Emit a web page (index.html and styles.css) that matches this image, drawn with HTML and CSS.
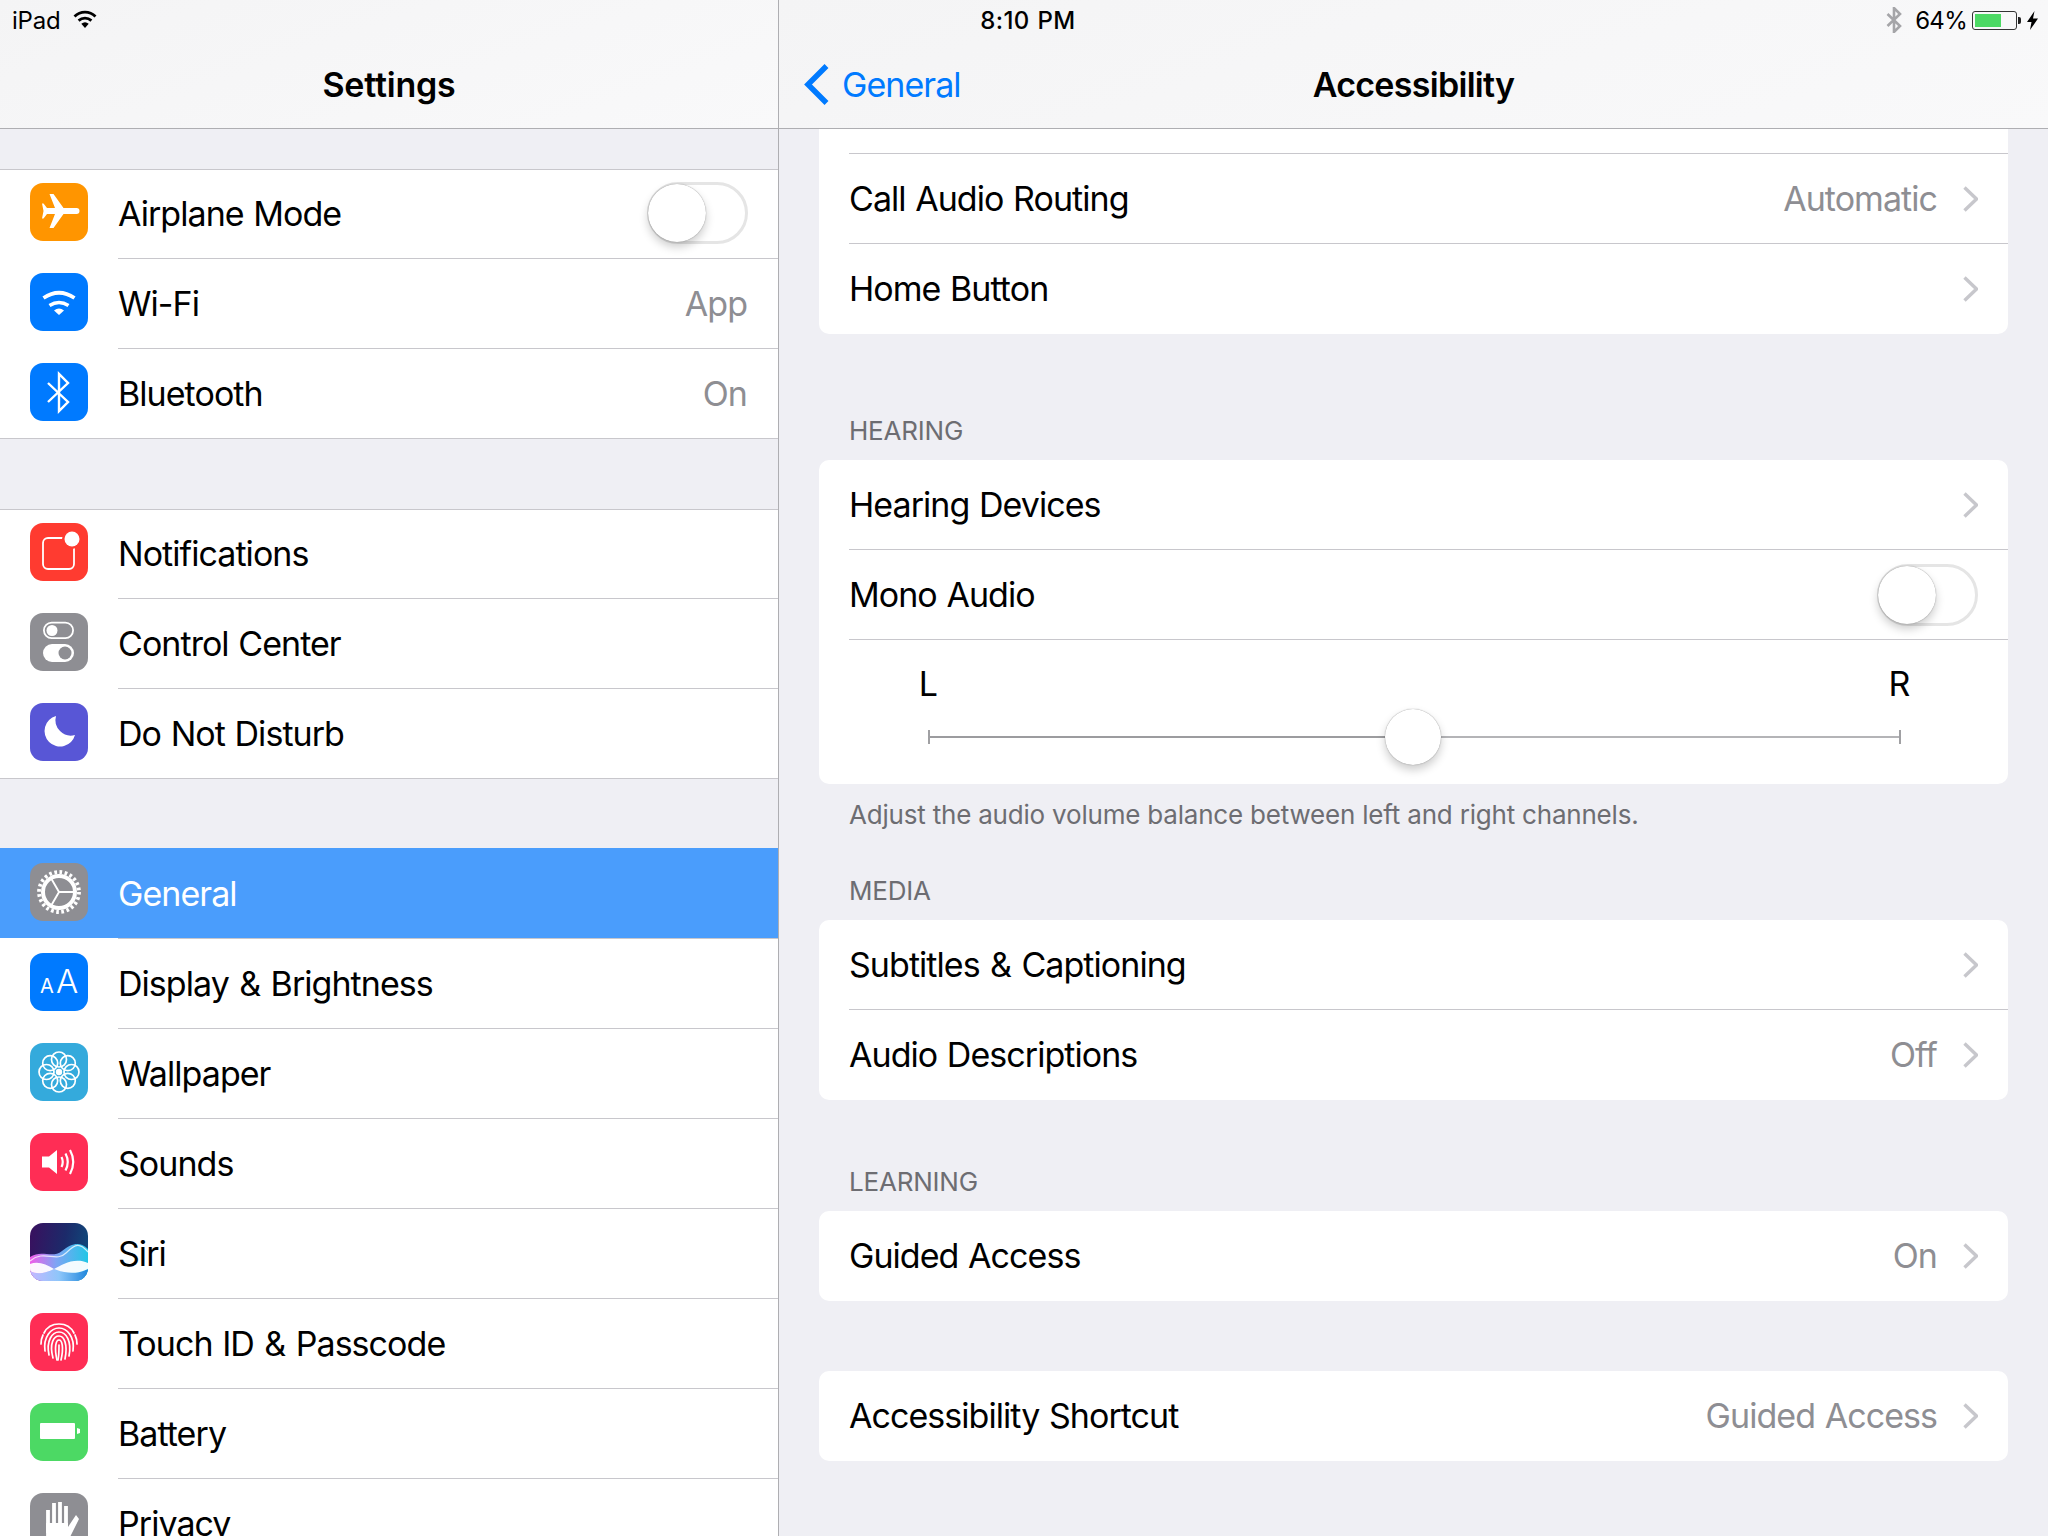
FILE: index.html
```html
<!DOCTYPE html>
<html lang="en">
<head>
<meta charset="utf-8">
<title>Settings - Accessibility</title>
<link rel="stylesheet" href="styles.css">
</head>
<body>
<div class="app">
  <div class="status">
    <div class="status-left">
      <span>iPad</span>
      <svg class="status-wifi" viewBox="0 0 24 18"><path d="M1.5 6.5A15 15 0 0 1 22.5 6.5" class="st-b"/><path d="M5.6 10.6A9.6 9.6 0 0 1 18.4 10.6" class="st-b"/><path d="M12 18L8.3 13.8A5.6 5.6 0 0 1 15.7 13.8Z"/></svg>
    </div>
    <div class="status-time">8:10 PM</div>
    <div class="status-right">
      <svg class="status-bt" viewBox="0 0 16 26"><path d="M1.5 7L14 19L8 25V1L14 7L1.5 19"/></svg>
      <span class="status-pct">64%</span>
      <div class="battery"><div class="battery-fill"></div></div>
      <div class="battery-tip"></div>
      <svg class="status-bolt" viewBox="0 0 11 19"><path d="M7.5 0L0 11H4.5L3 19L11 7.5H6Z"/></svg>
    </div>
  </div>

  <aside class="side">
    <header class="nav nav-side"><h1 class="nav-title">Settings</h1></header>
    <div class="side-list">
      <section class="group">
        <div class="row">
          <span class="icon bg-orange"><svg viewBox="0 0 58 58"><path class="w" d="M46.500 25H33.500L23.500 11H19.500L25 25H17L13.500 20.500H12L13.500 28L12 35.500H13.500L17 31H25L19.500 45H23.500L33.500 31H46.500Q49.500 31 49.500 28Q49.500 25 46.500 25Z"/></svg></span>
          <div class="row-body"><span class="label">Airplane Mode</span><span class="switch"><span class="knob"></span></span></div>
        </div>
        <div class="row">
          <span class="icon bg-blue"><svg viewBox="0 0 58 58"><path class="s" stroke-width="3.800" d="M13.500 25Q29 14.500 44.500 25"/><path class="s" stroke-width="3.500" d="M19.500 32.500Q29 26.500 38.500 32.500"/><path class="w" d="M29 42L24 37.500Q29 33.500 34 37.500Z"/></svg></span>
          <div class="row-body"><span class="label">Wi-Fi</span><span class="value">App</span></div>
        </div>
        <div class="row">
          <span class="icon bg-blue"><svg viewBox="0 0 58 58"><path class="s" stroke-width="2.400" d="M18 20L38 39L29 48V11L38 20L18 39"/></svg></span>
          <div class="row-body"><span class="label">Bluetooth</span><span class="value">On</span></div>
        </div>
      </section>

      <section class="group group-gap">
        <div class="row">
          <span class="icon bg-red"><svg viewBox="0 0 58 58"><rect class="s" stroke-width="1.800" x="13" y="15" width="31" height="31" rx="5"/><circle cx="42" cy="16" r="10" fill="#ff3b30"/><circle class="w" cx="42" cy="16" r="7.500"/></svg></span>
          <div class="row-body"><span class="label">Notifications</span></div>
        </div>
        <div class="row">
          <span class="icon bg-gray"><svg viewBox="0 0 58 58"><rect class="s" stroke-width="1.800" x="13.900" y="9.600" width="29.200" height="15.500" rx="7.750"/><circle class="w" cx="22" cy="17.500" r="5.500"/><rect class="w" x="13" y="31" width="31" height="18" rx="9"/><circle cx="35" cy="40" r="6.500" fill="#8e8e93"/></svg></span>
          <div class="row-body"><span class="label">Control Center</span></div>
        </div>
        <div class="row">
          <span class="icon bg-indigo"><svg viewBox="0 0 58 58"><path class="w" d="M26 13A15.500 15.500 0 1 0 45 32A15.500 15.500 0 0 1 26 13Z"/></svg></span>
          <div class="row-body"><span class="label">Do Not Disturb</span></div>
        </div>
      </section>

      <section class="group group-open">
        <div class="row row-selected">
          <span class="icon bg-gray"><svg viewBox="0 0 58 58"><circle class="s" stroke-width="3.800" stroke-dasharray="2.700 2.530" cx="29" cy="29" r="20"/><circle class="s" stroke-width="4" cx="29" cy="29" r="16"/><path class="s" stroke-width="1.900" d="M29 29H44M29 29L21.500 42M29 29L21.500 16"/></svg></span>
          <div class="row-body"><span class="label">General</span></div>
        </div>
        <div class="row">
          <span class="icon bg-blue"><svg viewBox="0 0 58 58"><text class="aa-small" x="10" y="40">A</text><text class="aa-big" x="26" y="40">A</text></svg></span>
          <div class="row-body"><span class="label">Display <span class="amp">&amp;</span> Brightness</span></div>
        </div>
        <div class="row">
          <span class="icon bg-cyan"><svg viewBox="0 0 58 58"><g class="flower"><circle class="s" cx="29" cy="16.500" r="7.500"/><circle class="s" cx="29" cy="41.500" r="7.500"/><circle class="s" cx="16.500" cy="29" r="7.500"/><circle class="s" cx="41.500" cy="29" r="7.500"/><circle class="s" cx="20.200" cy="20.200" r="7.500"/><circle class="s" cx="37.800" cy="20.200" r="7.500"/><circle class="s" cx="20.200" cy="37.800" r="7.500"/><circle class="s" cx="37.800" cy="37.800" r="7.500"/></g><circle class="w" cx="29" cy="29" r="3.200"/></svg></span>
          <div class="row-body"><span class="label">Wallpaper</span></div>
        </div>
        <div class="row">
          <span class="icon bg-pink"><svg viewBox="0 0 58 58"><path class="w" d="M12 23.500H19L27 17V41L19 34.500H12Z"/><path class="s" stroke-width="2.200" d="M31.500 24Q34 29 31.500 34M35.500 20.500Q40 29 35.500 37.500M40 17Q46.500 29 40 41"/></svg></span>
          <div class="row-body"><span class="label">Sounds</span></div>
        </div>
        <div class="row">
          <span class="icon bg-siri"><svg viewBox="0 0 58 58"><defs><linearGradient id="wa" x1="0" x2="1" y1="0" y2="0"><stop offset="0" stop-color="#f05ce8"/><stop offset=".45" stop-color="#7fa4f4"/><stop offset="1" stop-color="#22c6e6"/></linearGradient><linearGradient id="wb" x1="0" x2="1" y1="0" y2="0"><stop offset="0" stop-color="#c4b8ff"/><stop offset=".5" stop-color="#8ec6fa"/><stop offset="1" stop-color="#1f86dc"/></linearGradient></defs><path fill="url(#wa)" d="M0 34C12 26 22 36 32 28S50 18 58 26V58H0Z"/><path class="s" stroke-width="1.200" opacity=".75" d="M0 38C14 26 26 40 36 30S50 20 58 29"/><path fill="url(#wb)" d="M0 48C8 52 16 50 24 46C34 50 46 52 58 46V58H0Z"/><path class="w" opacity=".94" d="M0 41C8 38 16 41 24 46C32 42 44 34 58 40V46C46 52 34 50 24 46C16 50 8 52 0 48Z"/></svg></span>
          <div class="row-body"><span class="label">Siri</span></div>
        </div>
        <div class="row">
          <span class="icon bg-pink"><svg viewBox="0 0 58 58"><g class="finger"><path d="M14 20C20 8 38 8 44 20"/><path d="M11 31C11 26 12 24 13 22M47 31C47 26 46 24 45 22"/><path d="M15 38C13 24 21 15 29 15S45 24 43 38"/><path d="M19 42C16 28 22 19 29 19S42 28 39 43"/><path d="M23 45C19 30 24 23 29 23S38 31 35 46"/><path d="M27 47C24 34 26 27 29 27S34 34 31 47"/><path d="M29 32C29 38 29 42 28 47"/></g></svg></span>
          <div class="row-body"><span class="label">Touch ID <span class="amp">&amp;</span> Passcode</span></div>
        </div>
        <div class="row">
          <span class="icon bg-green"><svg viewBox="0 0 58 58"><rect class="w" x="10" y="20" width="35" height="16" rx="1"/><path class="w" d="M47 25L50 26V30L47 31Z"/></svg></span>
          <div class="row-body"><span class="label">Battery</span></div>
        </div>
        <div class="row">
          <span class="icon bg-gray"><svg viewBox="0 0 58 58"><path class="s" stroke-width="3.800" d="M18 17V40M24 10V36M30 9V36M36 13V36"/><path class="w" d="M16.100 30H38V34L46 22L49 26L40 44V58H16.100Z"/></svg></span>
          <div class="row-body"><span class="label">Privacy</span></div>
        </div>
      </section>
    </div>
  </aside>

  <main class="detail">
    <header class="nav nav-detail">
      <a class="back"><svg class="back-chevron" viewBox="0 0 25 41"><path d="M22.500 2L4 20.500L22.500 39"/></svg><span>General</span></a>
      <h1 class="nav-title">Accessibility</h1>
      <span></span>
    </header>
    <div class="detail-list">
      <section class="card card-top">
        <div class="item"><span class="label">Call Audio Routing</span><span class="value">Automatic</span><svg class="chevron" viewBox="0 0 15 26"><path d="M1.500 1.500L13.500 13L1.500 24.500"/></svg></div>
        <div class="item"><span class="label">Home Button</span><svg class="chevron" viewBox="0 0 15 26"><path d="M1.500 1.500L13.500 13L1.500 24.500"/></svg></div>
      </section>

      <h2 class="section-head head-hearing">HEARING</h2>
      <section class="card card-balance">
        <div class="item"><span class="label">Hearing Devices</span><svg class="chevron" viewBox="0 0 15 26"><path d="M1.500 1.500L13.500 13L1.500 24.500"/></svg></div>
        <div class="item"><span class="label">Mono Audio</span><span class="switch"><span class="knob"></span></span></div>
        <div class="balance">
          <div class="balance-labels"><span>L</span><span>R</span></div>
          <div class="slider">
            <span class="track track-left"></span>
            <span class="track track-right"></span>
            <span class="thumb"></span>
          </div>
        </div>
      </section>
      <p class="section-foot">Adjust the audio volume balance between left and right channels.</p>

      <h2 class="section-head head-media">MEDIA</h2>
      <section class="card">
        <div class="item"><span class="label">Subtitles <span class="amp">&amp;</span> Captioning</span><svg class="chevron" viewBox="0 0 15 26"><path d="M1.500 1.500L13.500 13L1.500 24.500"/></svg></div>
        <div class="item"><span class="label">Audio Descriptions</span><span class="value">Off</span><svg class="chevron" viewBox="0 0 15 26"><path d="M1.500 1.500L13.500 13L1.500 24.500"/></svg></div>
      </section>

      <h2 class="section-head head-learning">LEARNING</h2>
      <section class="card">
        <div class="item"><span class="label">Guided Access</span><span class="value">On</span><svg class="chevron" viewBox="0 0 15 26"><path d="M1.500 1.500L13.500 13L1.500 24.500"/></svg></div>
      </section>

      <section class="card card-gap">
        <div class="item"><span class="label">Accessibility Shortcut</span><span class="value">Guided Access</span><svg class="chevron" viewBox="0 0 15 26"><path d="M1.500 1.500L13.500 13L1.500 24.500"/></svg></div>
      </section>
    </div>
  </main>
</div>
</body>
</html>
```

FILE: styles.css
```css
* { box-sizing: border-box; }
html, body { margin: 0; padding: 0; }
body {
  width: 2048px;
  height: 1536px;
  overflow: hidden;
  background: #efeff4;
  color: #000;
  font-family: Inter, "Liberation Sans", sans-serif;
  font-size: 34px;
  letter-spacing: -0.95px;
  word-spacing: 1px;
}
h1, h2, p { margin: 0; font: inherit; }
.amp { margin: 0 0.8px; }

.app { position: relative; display: flex; width: 2048px; height: 1536px; overflow: hidden; }

/* Status bar overlays both nav bars */
.status {
  position: absolute;
  top: 0; left: 0; right: 0;
  height: 40px;
  padding: 0 10px 0 12px;
  display: grid;
  grid-template-columns: 1fr auto 1fr;
  align-items: center;
  font-size: 24px;
  letter-spacing: -0.2px;
  z-index: 2;
}
.status-left { display: flex; align-items: center; gap: 12px; }
.status-wifi { width: 24px; height: 18px; margin-top: -2px; }
.st-b { fill: none; stroke: #000; stroke-width: 2.8; }
.status-time { font-weight: 500; margin-left: 6px; letter-spacing: 0.4px; }
.status-right { display: flex; align-items: center; justify-content: flex-end; }
.status-bt { width: 16px; height: 26px; fill: none; stroke: #a5a5a8; stroke-width: 2.6; margin-right: 13px; }
.status-pct { margin-right: 5px; letter-spacing: -0.7px; }
.battery { width: 45px; height: 19px; border: 1.5px solid #333; border-radius: 3px; padding: 2px; }
.battery-fill { width: 26px; height: 100%; background: #4cd964; }
.battery-tip { width: 3px; height: 7px; background: #222; margin-left: 1px; border-radius: 0 2px 2px 0; }
.status-bolt { width: 11px; height: 19px; fill: #000; margin-left: 6px; }

/* Nav bars */
.nav {
  height: 129px;
  padding-top: 40px;
  border-bottom: 1px solid #aeaeb2;
  background: linear-gradient(160deg, #f4f4f5, #f9f9fa);
}
.nav-side { display: flex; align-items: center; justify-content: center; }
.nav-title { font-weight: 600; letter-spacing: -0.7px; }
.nav-side .nav-title { letter-spacing: -0.2px; }
.nav-detail {
  display: grid;
  grid-template-columns: 1fr auto 1fr;
  align-items: center;
}
.back { display: flex; align-items: center; gap: 13px; margin-left: 25px; color: #007aff; }
.back-chevron { width: 25px; height: 41px; fill: none; stroke: #007aff; stroke-width: 5.500; }

/* Sidebar */
.side { width: 779px; flex: none; border-right: 1px solid #aeaeb2; }
.side-list { padding-top: 40px; }
.group { background: #fff; border-top: 1px solid #c8c7cc; border-bottom: 1px solid #c8c7cc; }
.group-gap { margin-top: 70px; }
.group-open { margin-top: 69px; border-top: 0; border-bottom: 0; }

.row { display: flex; height: 90px; padding-left: 30px; }
.row:first-child { height: 88px; }
.row-selected, .row-selected:first-child { height: 90px; background: #4a9dfc; color: #fff; }
.row .icon { margin-top: 15px; }
.row:first-child .icon { margin-top: 13px; }
.row-selected:first-child .icon { margin-top: 15px; }

.icon { display: block; flex: none; width: 58px; height: 58px; border-radius: 13px; overflow: hidden; }
.icon svg { display: block; width: 58px; height: 58px; }
.w { fill: #fff; }
.s { fill: none; stroke: #fff; }
.bg-orange { background: #ff9500; }
.bg-blue { background: #007aff; }
.bg-red { background: #ff3b30; }
.bg-gray { background: #8e8e93; }
.bg-indigo { background: #5856d6; }
.bg-cyan { background: #34aadc; }
.bg-pink { background: #ff2d55; }
.bg-green { background: #4cd964; }
.bg-siri { background: linear-gradient(100deg, #3a0f5e 0%, #1c2a6a 55%, #0d4f7e 100%); }
.flower .s { stroke-width: 1.700; }
.finger path { fill: none; stroke: #fff; stroke-width: 1.700; stroke-linecap: round; }
.aa-small { font-size: 20px; fill: #fff; letter-spacing: 0; }
.aa-big { font-size: 33px; font-weight: 300; fill: #fff; letter-spacing: 0; }

.row-body {
  flex: 1;
  display: flex;
  align-items: center;
  margin-left: 30px;
  padding-right: 30px;
  border-top: 1px solid #c8c7cc;
}
.row:first-child .row-body { border-top: 0; padding-bottom: 2px; }
.row-selected:first-child .row-body { padding-bottom: 0; }
.label { flex: 1; }
.value { color: #8e8e93; }
.row-body .value { margin-right: 1px; }

.switch {
  position: relative;
  display: block;
  flex: none;
  width: 101px;
  height: 62px;
  border: 3px solid #e5e5e5;
  border-radius: 31px;
  background: #fff;
}
.knob {
  position: absolute;
  left: -2px; top: -1px;
  width: 58px; height: 58px;
  border-radius: 50%;
  background: #fff;
  box-shadow: 0 0 1px rgba(0,0,0,.5), 0 5px 10px rgba(0,0,0,.2);
}

/* Detail pane */
.detail { flex: 1; min-width: 0; }
.detail-list { padding: 0 40px; }
.card { background: #fff; border-radius: 10px; padding: 0 0 1px 30px; }
.card-top { padding-top: 24px; border-radius: 0 0 10px 10px; }
.card-balance { padding-bottom: 0; }
.card-gap { margin-top: 70px; }
.item {
  display: flex;
  align-items: center;
  height: 90px;
  padding-right: 30px;
  border-top: 1px solid #c8c7cc;
}
.card > .item:first-child { border-top: 0; height: 89px; }
.card-top > .item:first-child { border-top: 1px solid #c8c7cc; height: 90px; }
.item .value { margin-right: 26px; }
.chevron { flex: none; width: 15px; height: 26px; fill: none; stroke: #c7c7cc; stroke-width: 3.400; }

.section-head, .section-foot { font-size: 26px; line-height: 32px; color: #6d6d72; padding-left: 30px; letter-spacing: -0.2px; word-spacing: 0; }
.section-head { font-weight: 400; padding-bottom: 13px; display: flex; align-items: flex-end; }
.head-hearing { height: 126px; }
.head-media { height: 89px; }
.head-learning { height: 111px; }
.section-foot { padding-top: 15px; height: 47px; }

.balance { height: 145px; margin-left: -30px; padding: 25px 107px 0 109px; position: relative; }
.balance::before { content: ""; position: absolute; left: 30px; right: 0; top: 0; border-top: 1px solid #c8c7cc; }
.balance-labels { display: flex; justify-content: space-between; margin: 0 -14px 0 -16px; line-height: 40px; }
.balance-labels span { width: 32px; text-align: center; }
.slider { position: relative; display: flex; align-items: center; height: 14px; margin-top: 26px; border-left: 2px solid #a0a0a3; border-right: 2px solid #a0a0a3; }
.track { display: block; height: 2px; }
.track-left { flex: 485; background: #9c9c9f; }
.track-right { flex: 487; background: #b4b4b7; }
.thumb {
  position: absolute;
  left: 49.800%;
  top: 50%;
  width: 56px; height: 56px;
  margin: -28px 0 0 -28px;
  border-radius: 50%;
  background: #fff;
  box-shadow: 0 0 1px rgba(0,0,0,.5), 0 5px 10px rgba(0,0,0,.2);
}
```
